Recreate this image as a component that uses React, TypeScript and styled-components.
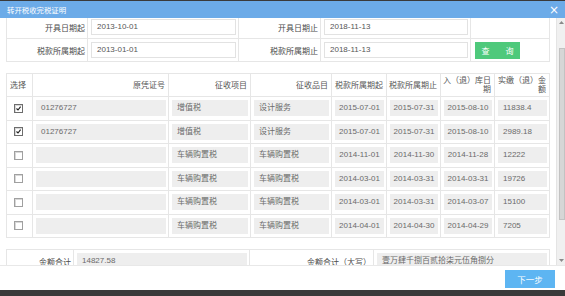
import { useLayoutEffect, useRef } from "react";
import styled, { createGlobalStyle } from "styled-components";

const GlobalStyle = createGlobalStyle`
  html, body {
    margin: 0;
    padding: 0;
    background: #3a3a3a;
  }
  body {
    font-family: "Liberation Sans", "Noto Sans CJK SC", sans-serif;
    font-size: 8px;
    color: #555;
  }
`;

interface Row {
  checked: boolean;
  voucher: string;
  project: string;
  item: string;
  start: string;
  end: string;
  stored: string;
  amount: string;
}

const rows: Row[] = [
  { checked: true, voucher: "01276727", project: "增值税", item: "设计服务", start: "2015-07-01", end: "2015-07-31", stored: "2015-08-10", amount: "11838.4" },
  { checked: true, voucher: "01276727", project: "增值税", item: "设计服务", start: "2015-07-01", end: "2015-07-31", stored: "2015-08-10", amount: "2989.18" },
  { checked: false, voucher: "", project: "车辆购置税", item: "车辆购置税", start: "2014-11-01", end: "2014-11-30", stored: "2014-11-28", amount: "12222" },
  { checked: false, voucher: "", project: "车辆购置税", item: "车辆购置税", start: "2014-03-01", end: "2014-03-31", stored: "2014-03-31", amount: "19726" },
  { checked: false, voucher: "", project: "车辆购置税", item: "车辆购置税", start: "2014-03-01", end: "2014-03-31", stored: "2014-03-07", amount: "15100" },
  { checked: false, voucher: "", project: "车辆购置税", item: "车辆购置税", start: "2014-04-01", end: "2014-04-30", stored: "2014-04-29", amount: "7205" },
];

const Modal = styled.div`
  margin-top: 1px;
  height: 289px;
  background: #fff;
  display: flex;
  flex-direction: column;
`;

const TitleBar = styled.div`
  height: 17px;
  flex: none;
  background: #6cabe8;
  color: #fff;
  display: flex;
  align-items: center;
  justify-content: space-between;
  padding: 0 6px 0 7px;
  font-size: 7.4px;
`;

const Close = styled.span`
  font-size: 12px;
  line-height: 1;
  color: #fff;
  font-family: "DejaVu Sans", sans-serif;
`;

const Body = styled.div`
  height: 247px;
  flex: none;
  display: flex;
`;

const Viewport = styled.div`
  flex: 1;
  overflow: hidden;
`;

const ScrollTrack = styled.div`
  width: 8px;
  flex: none;
  background: #f0f0f0;
  border-left: 1px solid #e4e4e4;
  display: flex;
  flex-direction: column;
  align-items: center;
`;

const ArrowButton = styled.div`
  height: 9px;
  width: 100%;
  flex: none;
  display: flex;
  align-items: center;
  justify-content: center;
`;

const Thumb = styled.div`
  width: 6px;
  height: 172px;
  margin: 21px 0 0 1px;
  box-sizing: border-box;
  background: #d6d6d6;
  border: 1px solid #c2c2c2;
`;

const TrackFill = styled.div`
  flex: 1;
`;

const Content = styled.div`
  padding: 27px 7px 54px 6px;
  display: flex;
  flex-direction: column;
  gap: 11px;
`;

const Table = styled.table`
  width: 543px;
  border-collapse: collapse;
  table-layout: fixed;
  td, th {
    border: 1px solid #e6e6e6;
  }
`;

const FormRow = styled.tr`
  height: 23px;
`;

const Label = styled.td`
  text-align: right;
  padding: 0 2px 0 0;
  color: #4a4a4a;
  white-space: nowrap;
`;

const FieldCell = styled.td`
  padding: 0 2px 0 3px;
  vertical-align: middle;
`;

const Input = styled.div`
  height: 14px;
  line-height: 14px;
  border: 1px solid #e2e2e2;
  padding-left: 5px;
  color: #555;
`;

const QueryButton = styled.button`
  width: 45px;
  height: 17px;
  margin-left: 1px;
  border: none;
  background: #4ec97b;
  color: #fff;
  font-family: inherit;
  font-size: 8px;
  padding: 0;
  display: block;
`;

const HeadCell = styled.th<{ $center?: boolean }>`
  height: 22px;
  font-weight: normal;
  color: #555;
  line-height: 9px;
  white-space: nowrap;
  text-align: ${(p) => (p.$center ? "center" : "right")};
  padding: 0 3px 0 0;
`;

const DataRow = styled.tr`
  height: 23.5px;
`;

const DataCell = styled.td`
  padding: 0 2px 0 3px;
  vertical-align: middle;
`;

const Field = styled.div<{ $center?: boolean }>`
  height: 16px;
  line-height: 16px;
  background: #eeeeee;
  color: #6a6a6a;
  padding: ${(p) => (p.$center ? "0" : "0 0 0 5px")};
  text-align: ${(p) => (p.$center ? "center" : "left")};
  white-space: nowrap;
  overflow: hidden;
`;

const CheckCell = styled.td`
  text-align: center;
  vertical-align: middle;
  padding: 0 2px 0 0;
`;

const Check = styled.span<{ $checked: boolean }>`
  display: inline-flex;
  width: 7px;
  height: 7px;
  border: 1px solid ${(p) => (p.$checked ? "#6d6d6d" : "#a0a0a0")};
  background: #fff;
  box-shadow: inset 1px 1px 0 #d8d8d8;
  vertical-align: middle;
`;

const SumRow = styled.tr`
  height: 23px;
`;

const Footer = styled.div`
  height: 25px;
  flex: none;
  display: flex;
  justify-content: flex-end;
  align-items: flex-start;
  padding: 4px 10px 0 0;
  box-sizing: border-box;
  border-top: 1px solid #e8e8e8;
`;

const NextButton = styled.button`
  width: 50px;
  height: 18px;
  border: none;
  background: #5db5f2;
  color: #fff;
  font-family: inherit;
  font-size: 8.5px;
  padding: 0;
`;

function Checkbox({ checked }: { checked: boolean }) {
  return (
    <Check $checked={checked}>
      {checked && (
        <svg width="7" height="7" viewBox="0 0 7 7">
          <path d="M1.5 3.5 L3 5 L5.6 1.6" fill="none" stroke="#1e1e1e" strokeWidth="1.1" />
        </svg>
      )}
    </Check>
  );
}

function Arrow({ up }: { up: boolean }) {
  return (
    <ArrowButton>
      <svg width="5" height="3" viewBox="0 0 5 3">
        <path d={up ? "M0 3 L2.5 0 L5 3 Z" : "M0 0 L2.5 3 L5 0 Z"} fill="#8a8a8a" />
      </svg>
    </ArrowButton>
  );
}

export default function App() {
  const viewRef = useRef<HTMLDivElement>(null);

  useLayoutEffect(() => {
    if (viewRef.current) viewRef.current.scrollTop = 30;
  }, []);

  return (
    <>
      <GlobalStyle />
      <Modal>
        <TitleBar>
          <span>转开税收完税证明</span>
          <Close>×</Close>
        </TitleBar>
        <Body>
          <Viewport ref={viewRef}>
            <Content>
              <Table>
                <colgroup>
                  <col style={{ width: 81 }} />
                  <col style={{ width: 151 }} />
                  <col style={{ width: 82 }} />
                  <col style={{ width: 150 }} />
                  <col style={{ width: 79 }} />
                </colgroup>
                <tbody>
                  <FormRow>
                    <Label>开具日期起</Label>
                    <FieldCell><Input>2013-10-01</Input></FieldCell>
                    <Label>开具日期止</Label>
                    <FieldCell><Input>2018-11-13</Input></FieldCell>
                    <FieldCell />
                  </FormRow>
                  <FormRow>
                    <Label>税款所属期起</Label>
                    <FieldCell><Input>2013-01-01</Input></FieldCell>
                    <Label>税款所属期止</Label>
                    <FieldCell><Input>2018-11-13</Input></FieldCell>
                    <FieldCell>
                      <QueryButton>查　　询</QueryButton>
                    </FieldCell>
                  </FormRow>
                </tbody>
              </Table>

              <Table>
                <colgroup>
                  <col style={{ width: 26 }} />
                  <col style={{ width: 136 }} />
                  <col style={{ width: 82 }} />
                  <col style={{ width: 81 }} />
                  <col style={{ width: 55 }} />
                  <col style={{ width: 54 }} />
                  <col style={{ width: 54 }} />
                  <col style={{ width: 55 }} />
                </colgroup>
                <thead>
                  <tr>
                    <HeadCell $center>选择</HeadCell>
                    <HeadCell>原凭证号</HeadCell>
                    <HeadCell>征收项目</HeadCell>
                    <HeadCell>征收品目</HeadCell>
                    <HeadCell>税款所属期起</HeadCell>
                    <HeadCell>税款所属期止</HeadCell>
                    <HeadCell>
                      入（退）库日
                      <br />期
                    </HeadCell>
                    <HeadCell>
                      实缴（退）金
                      <br />额
                    </HeadCell>
                  </tr>
                </thead>
                <tbody>
                  {rows.map((r, i) => (
                    <DataRow key={i}>
                      <CheckCell><Checkbox checked={r.checked} /></CheckCell>
                      <DataCell><Field>{r.voucher}</Field></DataCell>
                      <DataCell><Field>{r.project}</Field></DataCell>
                      <DataCell><Field>{r.item}</Field></DataCell>
                      <DataCell><Field $center>{r.start}</Field></DataCell>
                      <DataCell><Field $center>{r.end}</Field></DataCell>
                      <DataCell><Field $center>{r.stored}</Field></DataCell>
                      <DataCell><Field>{r.amount}</Field></DataCell>
                    </DataRow>
                  ))}
                </tbody>
              </Table>

              <Table>
                <colgroup>
                  <col style={{ width: 67 }} />
                  <col style={{ width: 176 }} />
                  <col style={{ width: 124 }} />
                  <col style={{ width: 176 }} />
                </colgroup>
                <tbody>
                  <SumRow>
                    <Label>金额合计</Label>
                    <DataCell><Field>14827.58</Field></DataCell>
                    <Label>金额合计（大写）</Label>
                    <DataCell><Field>壹万肆千捌百贰拾柒元伍角捌分</Field></DataCell>
                  </SumRow>
                </tbody>
              </Table>
            </Content>
          </Viewport>
          <ScrollTrack>
            <Arrow up />
            <Thumb />
            <TrackFill />
            <Arrow up={false} />
          </ScrollTrack>
        </Body>
        <Footer>
          <NextButton>下一步</NextButton>
        </Footer>
      </Modal>
    </>
  );
}
